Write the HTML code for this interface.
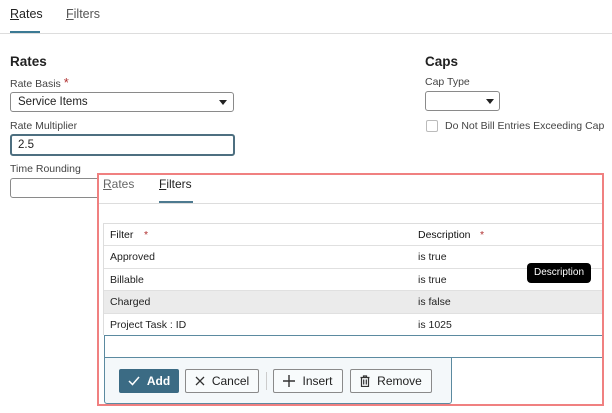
<!DOCTYPE html>
<html><head><style>
*{box-sizing:border-box;margin:0;padding:0}
body{width:612px;height:413px;background:#fff;font-family:"Liberation Sans",sans-serif;color:#222;position:relative;overflow:hidden}
.a{position:absolute;white-space:nowrap}
.lbl{font-size:10.5px;color:#444}
.box{position:absolute;border:1px solid #8a8a8a;border-radius:3px;background:#fff}
.caret{position:absolute;width:0;height:0;border-left:4px solid transparent;border-right:4px solid transparent;border-top:5px solid #222}
.row{position:absolute;left:104px;width:498px;border-bottom:1px solid #e0e0e0;font-size:10.5px}
.row span{position:absolute;top:5px}
.btn{position:absolute;top:369px;height:24px;border:1px solid #8a8a8a;border-radius:2px;background:#f8fbfc;font-size:12px;color:#222;display:flex;align-items:center;justify-content:center;gap:7px}
</style></head><body>
<div class="a" style="left:10px;top:7px;font-size:12.5px"><u>R</u>ates</div>
<div class="a" style="left:66px;top:7px;font-size:12.5px;color:#555"><u>F</u>ilters</div>
<div class="a" style="left:10px;top:31px;width:30px;height:2px;background:#3b7a94"></div>
<div class="a" style="left:0;top:33px;width:612px;height:1px;background:#ddd"></div>

<div class="a" style="left:10px;top:54px;font-size:13.5px;font-weight:bold">Rates</div>
<div class="a lbl" style="left:10px;top:75px">Rate Basis <span style="color:#b03030;font-size:13px">*</span></div>
<div class="box" style="left:10px;top:92px;width:224px;height:20px"><span class="a" style="left:7px;top:3px;font-size:11.5px">Service Items</span><div class="caret" style="left:208px;top:7px"></div></div>
<div class="a lbl" style="left:10px;top:120px">Rate Multiplier</div>
<div class="box" style="left:10px;top:134px;width:225px;height:22px;border:2px solid #4d6f80"><span class="a" style="left:6px;top:3px;font-size:11.5px">2.5</span></div>
<div class="a lbl" style="left:10px;top:163px">Time Rounding</div>
<div class="box" style="left:10px;top:178px;width:100px;height:20px"></div>

<div class="a" style="left:425px;top:54px;font-size:13.5px;font-weight:bold">Caps</div>
<div class="a lbl" style="left:425px;top:76px">Cap Type</div>
<div class="box" style="left:425px;top:91px;width:75px;height:20px"><div class="caret" style="left:60px;top:7px"></div></div>
<div class="a" style="left:426px;top:120px;width:12px;height:12px;border:1px solid #bbb;border-radius:2px"></div>
<div class="a lbl" style="left:445px;top:120px">Do Not Bill Entries Exceeding Cap</div>

<div class="a" style="left:97px;top:173px;width:507px;height:233px;border:2px solid #f08080;background:#fff"></div>
<div class="a" style="left:103px;top:177px;font-size:12px;color:#666"><u>R</u>ates</div>
<div class="a" style="left:159px;top:177px;font-size:12px;color:#222"><u>F</u>ilters</div>
<div class="a" style="left:159px;top:201px;width:34px;height:2px;background:#4d7a90"></div>
<div class="a" style="left:99px;top:203px;width:503px;height:1px;background:#ddd"></div>

<div class="a" style="left:103px;top:223px;width:499px;height:1px;background:#ddd"></div>
<div class="a" style="left:103px;top:223px;width:1px;height:112px;background:#ddd"></div>
<div class="row" style="top:224px;height:22px"><span style="left:6px;color:#111">Filter</span><span style="left:40px;color:#b03030">*</span><span style="left:314px;color:#111">Description</span><span style="left:376px;color:#b03030">*</span></div>
<div class="row" style="top:246px;height:23px"><span style="left:6px">Approved</span><span style="left:314px">is true</span></div>
<div class="row" style="top:269px;height:22px"><span style="left:6px">Billable</span><span style="left:314px">is true</span></div>
<div class="row" style="top:291px;height:23px;background:#ebebeb"><span style="left:6px">Charged</span><span style="left:314px">is false</span></div>
<div class="row" style="top:314px;height:22px"><span style="left:6px">Project Task : ID</span><span style="left:314px">is 1025</span></div>
<div class="a" style="left:104px;top:335px;width:498px;height:23px;border:1px solid #5b8aa0;border-right:none;background:#fff"></div>
<div class="a" style="left:104px;top:357px;width:348px;height:47px;border:1px solid #5b8aa0;border-radius:0 0 3px 3px;background:#f4f8fa"></div>
<div class="btn" style="left:119px;width:60px;background:#3b6b84;border-color:#3b6b84;color:#fff;font-weight:bold"><svg width="12" height="10" viewBox="0 0 12 10"><path d="M1 5l3.5 3.5L11 1" stroke="#fff" stroke-width="1.5" fill="none"/></svg>Add</div>
<div class="btn" style="left:185px;width:74px"><svg width="10" height="10"><path d="M1 1l8 8M9 1l-8 8" stroke="#333" stroke-width="1.3"/></svg>Cancel</div>
<div class="a" style="left:266px;top:372px;width:1px;height:18px;background:#ccc"></div>
<div class="btn" style="left:273px;width:70px"><svg width="12" height="12"><path d="M6 0v12M0 6h12" stroke="#333" stroke-width="1.4"/></svg>Insert</div>
<div class="btn" style="left:350px;width:82px"><svg width="10" height="12" viewBox="0 0 10 12"><path d="M0.5 2.5h9M3.5 2.5V1h3v1.5M1.5 2.5v9h7v-9M3.7 4.5v5M6.3 4.5v5" stroke="#333" stroke-width="1.2" fill="none"/></svg>Remove</div>
<div class="a" style="left:527px;top:263px;width:64px;height:20px;background:#000;border-radius:4px;color:#fff;font-size:10px;text-align:center;line-height:20px">Description</div>
</body></html>
